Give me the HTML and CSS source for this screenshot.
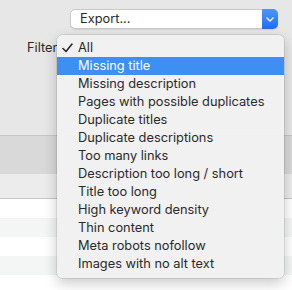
FILE: index.html
```html
<!DOCTYPE html>
<html lang="en">
<head>
    <meta charset="UTF-8">
    <title>filter</title>
    <link rel="stylesheet" href="styles.css">
</head>
<body>
<div class="toolbar">
    <div class="export-row">
        <div class="select">
            <span class="select-text">Export...</span>
            <span class="select-btn">
                <svg width="8" height="5" viewBox="0 0 8 5"><path d="M1 1l3 3 3-3" fill="none" stroke="#fff" stroke-width="1.4" stroke-linecap="round" stroke-linejoin="round"/></svg>
            </span>
        </div>
    </div>
    <div class="filter-row">
        <span class="label">Filter</span>
    </div>
</div>
<div class="table">
    <div class="head"></div>
    <div class="subhead"></div>
    <div class="row"></div>
    <div class="row alt"></div>
    <div class="row"></div>
    <div class="row alt"></div>
    <div class="row"></div>
</div>

<ul class="menu">
    <li class="checked">
        <svg class="check" width="11" height="10" viewBox="0 0 11 10"><path d="M1 5.5l3 3L10 1" fill="none" stroke="#2a2a2a" stroke-width="1.6" stroke-linecap="round" stroke-linejoin="round"/></svg>
        All
    </li>
    <li class="on">Missing title</li>
    <li>Missing description</li>
    <li>Pages with possible duplicates</li>
    <li>Duplicate titles</li>
    <li>Duplicate descriptions</li>
    <li>Too many links</li>
    <li>Description too long / short</li>
    <li>Title too long</li>
    <li>High keyword density</li>
    <li>Thin content</li>
    <li>Meta robots nofollow</li>
    <li>Images with no alt text</li>
</ul>
</body>
</html>
```

FILE: styles.css
```css
*{
    padding: 0;
    margin: 0;
    list-style: none;
    box-sizing: border-box;
}
body{
    background: #e7e7e7;
    font-family: Inter, "Liberation Sans", Arial, sans-serif;
    font-size: 12.8px;
    color: #2a2a2a;
}
.toolbar{
    height: 135px;
    padding-top: 9px;
}
.export-row{
    display: flex;
    justify-content: flex-end;
    padding-right: 14px;
}
.select{
    display: flex;
    width: 208px;
    height: 20px;
    background: #fff;
    border: 1px solid #c9c9c9;
    border-radius: 5px;
    box-shadow: 0 1px 1px rgba(0,0,0,.08);
}
.select-text{
    flex: 1;
    padding-left: 9px;
    line-height: 18px;
}
.select-btn{
    width: 16px;
    margin: -1px -1px -1px 0;
    border-radius: 0 5px 5px 0;
    background: linear-gradient(#4d97fa, #1e6ef5);
    display: flex;
    align-items: center;
    justify-content: center;
}
.filter-row{
    padding: 11px 0 0 27px;
    line-height: 16px;
}
.table{
    border-top: 1px solid #c6c6c6;
}
.head{
    height: 38px;
    background: #d9d9d9;
}
.subhead{
    height: 25px;
    background: #ececec;
    border-bottom: 1px solid #c6c6c6;
}
.row{
    height: 19px;
    background: #fff;
}
.row.alt{
    background: #f4f5f5;
}
.menu{
    position: absolute;
    left: 57px;
    top: 35px;
    width: 227px;
    padding: 4px 0 5px;
    background: rgba(241,241,241,.98);
    border-radius: 6px;
    box-shadow: 0 0 0 1px rgba(0,0,0,.08), 0 5px 14px rgba(0,0,0,.22);
}
.menu li{
    position: relative;
    height: 18px;
    line-height: 18px;
    padding-left: 21px;
}
.menu li.on{
    background: #3d8ff1;
    color: #fff;
}
.check{
    position: absolute;
    left: 5px;
    top: 4px;
}
```
